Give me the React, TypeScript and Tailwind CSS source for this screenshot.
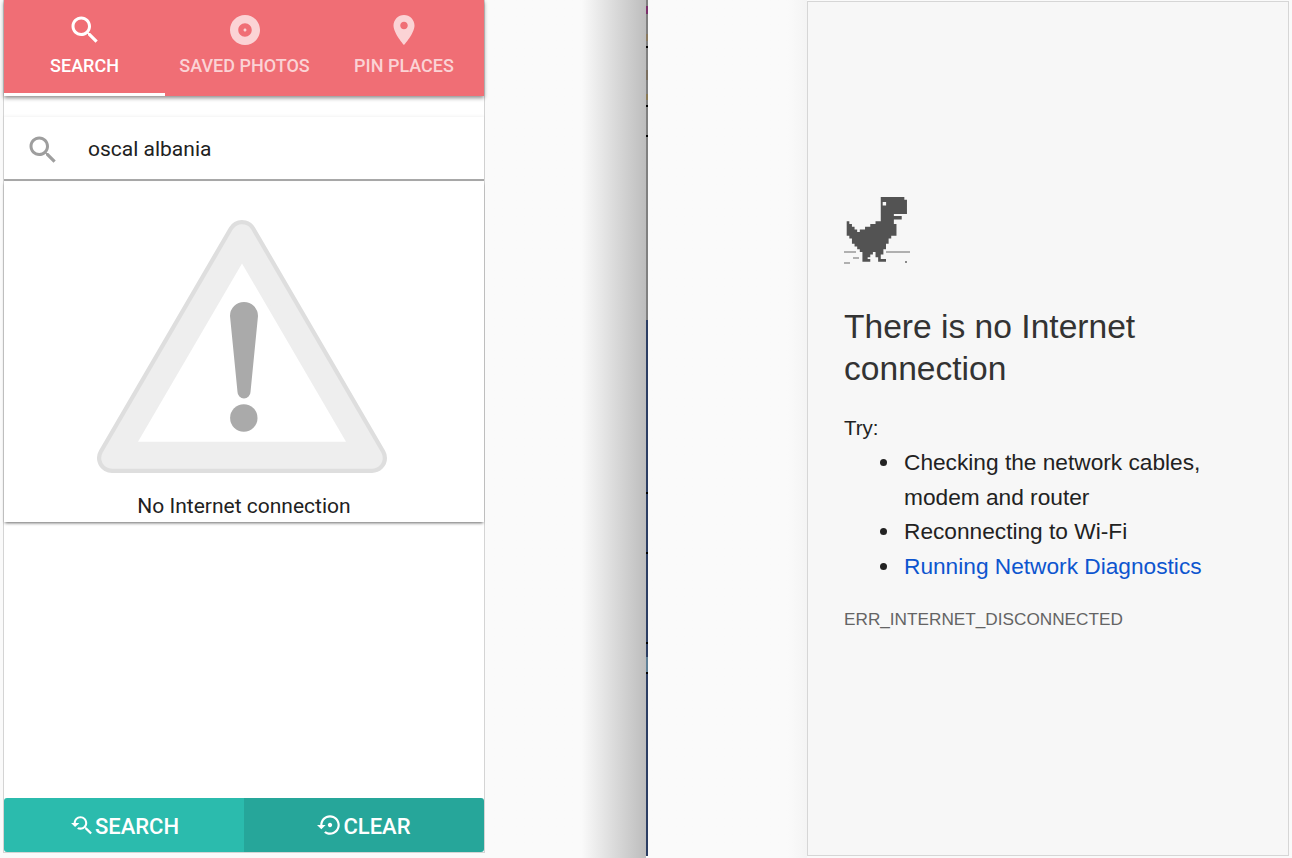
import React from "react";

const ICONS = {
  search: "M15.5 14h-.79l-.28-.27C15.41 12.59 16 11.11 16 9.5 16 5.91 13.09 3 9.5 3S3 5.91 3 9.5 5.91 16 9.5 16c1.61 0 3.09-.59 4.23-1.57l.27.28v.79l5 4.99L20.49 19l-4.99-5zm-6 0C7.01 14 5 11.99 5 9.5S7.01 5 9.5 5 14 7.01 14 9.5 11.99 14 9.5 14z",
  album: "M12 2C6.48 2 2 6.48 2 12s4.48 10 10 10 10-4.48 10-10S17.52 2 12 2zm0 14.5c-2.49 0-4.5-2.01-4.5-4.5S9.51 7.5 12 7.5s4.5 2.01 4.5 4.5-2.01 4.5-4.5 4.5zm0-5.5c-.55 0-1 .45-1 1s.45 1 1 1 1-.45 1-1-.45-1-1-1z",
  place: "M12 2C8.13 2 5 5.13 5 9c0 5.25 7 13 7 13s7-7.75 7-13c0-3.87-3.13-7-7-7zm0 9.5c-1.38 0-2.5-1.12-2.5-2.5s1.12-2.5 2.5-2.5 2.5 1.12 2.5 2.5-1.12 2.5-2.5 2.5z",
  searched: "M17.01 14h-.8l-.27-.27c.98-1.14 1.57-2.61 1.57-4.23 0-3.59-2.91-6.5-6.5-6.5s-6.5 3-6.5 6.5H2l3.84 4 4.16-4H6.51C6.51 7 8.53 5 11.01 5s4.5 2.01 4.5 4.5c0 2.48-2.02 4.5-4.5 4.5-.65 0-1.26-.14-1.82-.38L7.71 15.1c.97.57 2.09.9 3.3.9 1.61 0 3.08-.59 4.22-1.57l.27.27v.79l5.01 4.99L21.99 19l-4.98-5z",
  restore: "M14 12c0-1.1-.9-2-2-2s-2 .9-2 2 .9 2 2 2 2-.9 2-2zm-2-9c-4.97 0-9 4.03-9 9H0l4 4 4-4H5c0-3.87 3.13-7 7-7s7 3.13 7 7-3.13 7-7 7c-1.51 0-2.91-.49-4.06-1.3l-1.42 1.44C8.04 20.3 9.94 21 12 21c4.97 0 9-4.03 9-9s-4.03-9-9-9z",
};

function Icon({ d, className }: { d: string; className: string }) {
  return (
    <svg viewBox="0 0 24 24" className={className} fill="currentColor">
      <path d={d} />
    </svg>
  );
}

function Tab({ icon, label, className }: { icon: string; label: string; className: string }) {
  return (
    <div className={"h-[96px] flex flex-col items-center " + className}>
      <Icon d={icon} className="w-9 h-9 mt-3 shrink-0" />
      <span className="text-[18px] leading-[24px] font-medium mt-[6px] whitespace-nowrap">{label}</span>
    </div>
  );
}

const DINO_ROWS: number[][] = [
  [13, 21],
  [13, 22],
  [13, 22],
  [13, 22],
  [13, 22],
  [13, 22],
  [13, 17],
  [13, 20],
  [13, 17],
  [0, 0, 11, 17],
  [0, 1, 9, 18],
  [0, 2, 7, 18],
  [0, 3, 5, 16, 17, 18],
  [0, 16, 17, 18],
  [1, 16],
  [2, 15],
  [2, 15],
  [3, 14],
  [4, 14],
  [5, 13],
  [6, 9, 11, 13],
  [6, 8, 11, 12],
  [6, 7, 12, 12],
  [6, 8, 12, 14],
];

function dinoPath() {
  const cellX = 2.62;
  const cellY = 2.7;
  let d = "";
  DINO_ROWS.forEach((row, r) => {
    for (let i = 0; i < row.length; i += 2) {
      const x = 2.7 + row[i] * cellX;
      const w = (row[i + 1] - row[i] + 1) * cellX;
      const y = r * cellY;
      const h = r === DINO_ROWS.length - 1 ? cellY : cellY + 0.9;
      d += `M${x.toFixed(2)} ${y.toFixed(2)}h${w.toFixed(2)}v${h.toFixed(2)}h${(-w).toFixed(2)}z`;
    }
  });
  return d;
}

function Dino() {
  return (
    <svg viewBox="0 0 68 68" className="w-[68px] h-[68px]">
      <path d={dinoPath()} fill="#535353" />
      <rect x="38.7" y="5" width="3.4" height="3.5" fill="#f7f7f7" />
      <rect x="0" y="54.5" width="12" height="1" fill="#6b6b6b" />
      <rect x="42" y="54.5" width="24" height="1" fill="#6b6b6b" />
      <rect x="9" y="60.5" width="6" height="1" fill="#6b6b6b" />
      <rect x="0" y="65.5" width="6" height="1" fill="#6b6b6b" />
      <rect x="61" y="64" width="2" height="2" fill="#8a8a8a" />
    </svg>
  );
}

const WARN_OUTER = "112,458 372,458 242,235";

function Warning() {
  return (
    <svg viewBox="90 215 304 265" className="w-[304px] h-[265px]">
      <polygon points={WARN_OUTER} fill="#dedede" stroke="#dedede" strokeWidth="30" strokeLinejoin="round" />
      <polygon points={WARN_OUTER} fill="#eeeeee" stroke="#eeeeee" strokeWidth="21.5" strokeLinejoin="round" />
      <polygon points="138,441.7 346,441.7 242,263.5" fill="#ffffff" />
      <path d="M230 316 a14 14 0 0 1 28 0 l-7.5 76 a6.5 6.5 0 0 1 -13 0 z" fill="#aaaaaa" />
      <circle cx="243.8" cy="418" r="13.7" fill="#aaaaaa" />
    </svg>
  );
}

const LINE_SEGMENTS: [number, string][] = [
  [6, "#808080"],
  [8, "#7b2f6b"],
  [20, "#808080"],
  [7, "#8a7a60"],
  [5, "#808080"],
  [2, "#000000"],
  [22, "#808080"],
  [10, "#7a6f5f"],
  [14, "#808080"],
  [6, "#8a7a55"],
  [5, "#808080"],
  [2, "#000000"],
  [28, "#808080"],
  [2, "#000000"],
  [183, "#808080"],
  [172, "#2c3e63"],
  [2, "#000000"],
  [58, "#2c3e63"],
  [2, "#000000"],
  [88, "#2c3e63"],
  [2, "#000000"],
  [13, "#2c3e63"],
  [15, "#5f7f96"],
  [2, "#000000"],
  [182, "#2c3e63"],
];

function Bullet({ children }: { children: React.ReactNode }) {
  return (
    <li className="flex">
      <span className="w-[7px] h-[7px] rounded-full bg-[#222222] mt-[14px] mr-[17px] shrink-0" />
      <span>{children}</span>
    </li>
  );
}

export default function App() {
  return (
    <div className="w-[1292px] h-[858px] flex overflow-hidden bg-[#fafafa] font-['Roboto',sans-serif]">
      <div className="w-[485px] shrink-0 pl-[3px] h-full">
        <div className="w-[482px] h-[853px] bg-white border-x border-b border-[#d4d4d4] flex flex-col">
          <div className="h-[96px] bg-[#f06e75] flex shadow-[0_2px_4px_rgba(0,0,0,0.45)] relative">
            <Tab icon={ICONS.search} label="SEARCH" className="w-[161px] border-b-[3px] border-white text-white" />
            <Tab icon={ICONS.album} label="SAVED PHOTOS" className="w-[159px] text-[#fbd3d5]" />
            <Tab icon={ICONS.place} label="PIN PLACES" className="w-[160px] text-[#fbd3d5]" />
          </div>
          <div className="mt-[21px] h-[64px] flex items-center border-b-[2px] border-b-[#a8a8a8] shadow-[0_-1px_3px_rgba(0,0,0,0.05)]">
            <Icon d={ICONS.search} className="w-9 h-9 ml-[21px] mt-[3px] text-[#9e9e9e] shrink-0" />
            <span className="ml-[27px] mt-[1px] text-[21px] text-[#212121] leading-[24px]">oscal albania</span>
          </div>
          <div className="h-[341px] flex flex-col items-center shadow-[0_2px_3px_-1px_rgba(0,0,0,0.6)]">
            <div className="mt-[34px] h-[265px] shrink-0 mr-[4px]">
              <Warning />
            </div>
            <div className="mt-[14px] text-[21px] leading-[24px] text-[#212121]">No Internet connection</div>
          </div>
          <div className="flex-1" />
          <div className="h-[54px] flex">
            <div className="w-[240px] bg-[#2bbbad] rounded-l-[3px] flex items-center justify-center text-white text-[22px] font-medium pt-[2px]">
              <Icon d={ICONS.searched} className="w-[25px] h-[25px] mr-[1px] -mt-[2px]" />
              SEARCH
            </div>
            <div className="w-[240px] bg-[#26a69a] rounded-r-[3px] flex items-center justify-center text-white text-[22px] font-medium pt-[2px]">
              <Icon d={ICONS.restore} className="w-[26px] h-[26px] -mt-[2px]" />
              CLEAR
            </div>
          </div>
        </div>
      </div>

      <div className="w-[161px] shrink-0 h-full bg-gradient-to-r from-[#fafafa] from-[60%] to-[#bdbdbd]" />
      <div className="w-[2px] shrink-0 h-full flex flex-col">
        {LINE_SEGMENTS.map(([h, c], i) => (
          <div key={i} style={{ height: h, backgroundColor: c }} />
        ))}
      </div>
      <div className="w-[159px] shrink-0 h-full bg-gradient-to-r from-[#fafafa] from-[88%] to-[#f4f4f4]" />

      <div className="w-[482px] h-[855px] mt-px shrink-0 bg-[#f7f7f7] border border-[#d6d6d6] pl-[36px] font-['Liberation_Sans',sans-serif]">
        <div className="mt-[195px] h-[68px]">
          <Dino />
        </div>
        <h1 className="mt-[41px] text-[33.6px] leading-[42px] text-[#333333] w-[330px]">There is no Internet connection</h1>
        <p className="mt-[20px] text-[20.5px] leading-[35px] text-[#222222]">Try:</p>
        <ul className="list-none pl-[36px] text-[22.7px] leading-[34.7px] text-[#222222]">
          <Bullet>
            Checking the network cables,
            <br />
            modem and router
          </Bullet>
          <Bullet>Reconnecting to Wi-Fi</Bullet>
          <Bullet>
            <span className="text-[#0d55cf]">Running Network Diagnostics</span>
          </Bullet>
        </ul>
        <p className="mt-[23px] text-[17.2px] leading-[24px] text-[#646464]">ERR_INTERNET_DISCONNECTED</p>
      </div>
    </div>
  );
}
